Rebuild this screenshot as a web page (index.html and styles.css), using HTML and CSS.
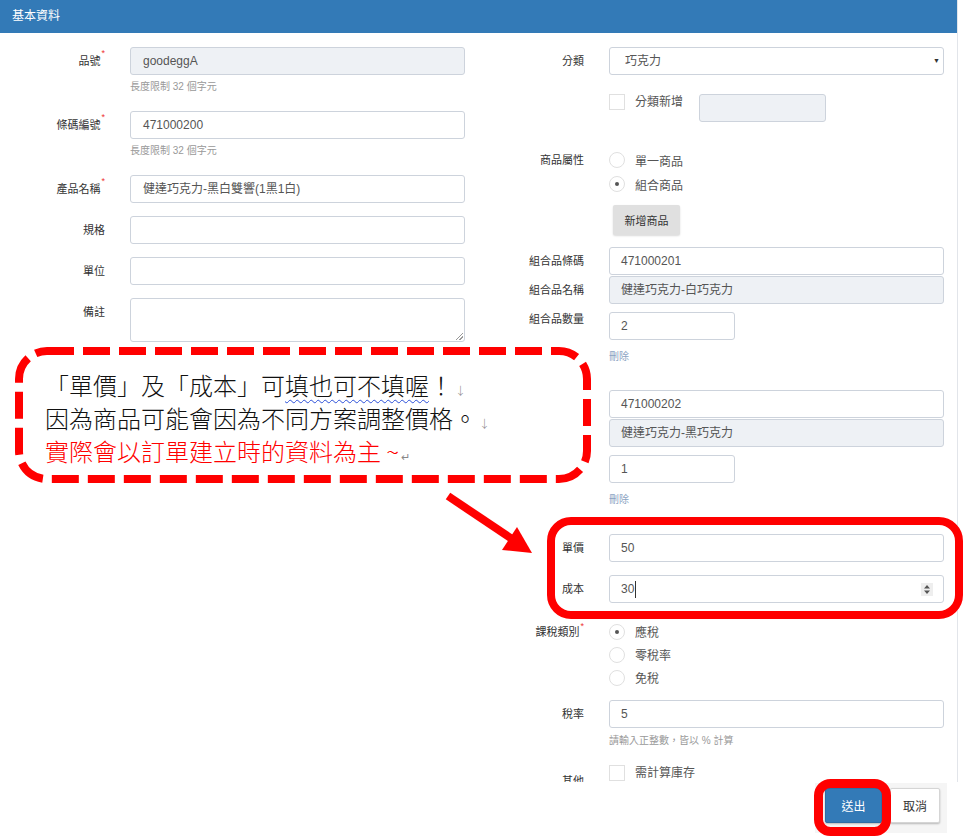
FILE: index.html
```html
<!DOCTYPE html>
<html lang="zh-Hant">
<head>
  <meta charset="UTF-8">
  <meta name="viewport" content="width=device-width, initial-scale=1.0">
  <title>基本資料</title>
  <link rel="stylesheet" href="styles.css">
</head>
<body>

<div class="page">
  <div class="panel">
    <div class="panel-heading">基本資料</div>

    <div class="panel-body">
      <!-- 左欄 -->
      <div class="col">
        <div class="form-row">
          <label class="lbl">品號<span class="req">*</span></label>
          <div class="ctl">
            <div class="field disabled">goodeggA</div>
            <div class="help">長度限制 32 個字元</div>
          </div>
        </div>
        <div class="form-row">
          <label class="lbl">條碼編號<span class="req">*</span></label>
          <div class="ctl">
            <div class="field">471000200</div>
            <div class="help">長度限制 32 個字元</div>
          </div>
        </div>
        <div class="form-row">
          <label class="lbl">產品名稱<span class="req">*</span></label>
          <div class="ctl"><div class="field">健達巧克力-黑白雙響(1黑1白)</div></div>
        </div>
        <div class="form-row">
          <label class="lbl">規格</label>
          <div class="ctl"><div class="field"></div></div>
        </div>
        <div class="form-row">
          <label class="lbl">單位</label>
          <div class="ctl"><div class="field"></div></div>
        </div>
        <div class="form-row">
          <label class="lbl">備註</label>
          <div class="ctl"><div class="field textarea"></div></div>
        </div>
      </div>

      <!-- 右欄 -->
      <div class="col right">
        <div class="form-row">
          <label class="lbl">分類</label>
          <div class="ctl">
            <div class="field select">巧克力<span class="caret">▼</span></div>
          </div>
        </div>

        <div class="form-row cat-new">
          <label class="lbl"></label>
          <div class="ctl inline">
            <span class="checkbox"></span>
            <span class="opt-text">分類新增</span>
            <div class="field disabled small"></div>
          </div>
        </div>

        <div class="form-row attr">
          <label class="lbl short">商品屬性</label>
          <div class="ctl">
            <div class="radio-item"><span class="radio"></span>單一商品</div>
            <div class="radio-item"><span class="radio checked"></span>組合商品</div>
          </div>
        </div>

        <div class="form-row add-row">
          <label class="lbl"></label>
          <div class="ctl"><button class="btn-gray">新增商品</button></div>
        </div>

        <div class="form-row combo-first">
          <label class="lbl">組合品條碼</label>
          <div class="ctl"><div class="field">471000201</div></div>
        </div>
        <div class="form-row combo-name">
          <label class="lbl">組合品名稱</label>
          <div class="ctl"><div class="field disabled">健達巧克力-白巧克力</div></div>
        </div>
        <div class="form-row combo-qty">
          <label class="lbl top">組合品數量</label>
          <div class="ctl"><div class="field qty">2</div></div>
        </div>
        <div class="form-row combo-del">
          <label class="lbl"></label>
          <div class="ctl"><a href="#" class="del">刪除</a></div>
        </div>

        <div class="form-row combo-first">
          <label class="lbl"></label>
          <div class="ctl"><div class="field">471000202</div></div>
        </div>
        <div class="form-row combo-name">
          <label class="lbl"></label>
          <div class="ctl"><div class="field disabled">健達巧克力-黑巧克力</div></div>
        </div>
        <div class="form-row combo-qty">
          <label class="lbl"></label>
          <div class="ctl"><div class="field qty">1</div></div>
        </div>
        <div class="form-row combo-del">
          <label class="lbl"></label>
          <div class="ctl"><a href="#" class="del">刪除</a></div>
        </div>

        <div class="form-row price">
          <label class="lbl">單價</label>
          <div class="ctl"><div class="field">50</div></div>
        </div>
        <div class="form-row cost">
          <label class="lbl">成本</label>
          <div class="ctl">
            <div class="field number">30<span class="cursor"></span>
              <span class="spin">
                <svg width="8" height="11" viewBox="0 0 8 11"><path d="M4 1 L7 4.5 H1 Z M4 10 L7 6.5 H1 Z" fill="#555"/></svg>
              </span>
            </div>
          </div>
        </div>

        <div class="form-row tax">
          <label class="lbl short">課稅類別<span class="req">*</span></label>
          <div class="ctl">
            <div class="radio-item tight"><span class="radio checked"></span>應稅</div>
            <div class="radio-item tight"><span class="radio"></span>零稅率</div>
            <div class="radio-item tight"><span class="radio"></span>免稅</div>
          </div>
        </div>

        <div class="form-row rate">
          <label class="lbl">稅率</label>
          <div class="ctl">
            <div class="field">5</div>
            <div class="help">請輸入正整數，皆以 % 計算</div>
          </div>
        </div>

        <div class="form-row other">
          <label class="lbl other-lbl">其他</label>
          <div class="ctl inline">
            <span class="checkbox"></span>
            <span class="opt-text">需計算庫存</span>
          </div>
        </div>
      </div>
    </div>
  </div>

  <div class="footer">
    <div class="actions">
      <button class="btn-primary">送出</button>
      <button class="btn-default">取消</button>
    </div>
  </div>

  <!-- 說明框 -->
  <div class="callout">
    <svg class="callout-border" width="576" height="136" viewBox="0 0 576 136">
      <rect x="4" y="4" width="568" height="128" rx="28" fill="none" stroke="#ff0000" stroke-width="8" stroke-dasharray="27 9"/>
    </svg>
    <p class="note">「單價」及「成本」可<span class="squiggle">填也可不填喔</span>！<span class="mark">↓</span></p>
    <p class="note">因為商品可能會因為不同方案調整價格。<span class="mark">↓</span></p>
    <p class="note red">實際會以訂單建立時的資料為主 ~<span class="mark">↵</span></p>
  </div>

  <!-- 標示 -->
  <svg class="marks" width="965" height="838" viewBox="0 0 965 838">
    <line x1="448" y1="496" x2="512" y2="539" stroke="#ff0000" stroke-width="8"/>
    <polygon points="532,553 502,550 517,527" fill="#ff0000"/>
    <rect x="551" y="521" width="408" height="94" rx="20" fill="none" stroke="#ff0000" stroke-width="8"/>
    <rect x="818.5" y="783.5" width="68" height="48" rx="12" fill="none" stroke="#ff0000" stroke-width="9"/>
  </svg>
</div>

</body>
</html>
```

FILE: styles.css
```css
body {
  margin: 0;
  font-family: "Liberation Sans", "Noto Sans CJK TC", sans-serif;
  background-color: #fff;
  color: #333;
}

.page {
  position: relative;
  width: 965px;
  height: 838px;
  overflow: hidden;
}

.panel {
  width: 957px;
  border-right: 1px solid #e2e5ea;
}

.panel-heading {
  height: 33px;
  line-height: 33px;
  padding-left: 12px;
  background-color: #337ab7;
  color: #fff;
  font-size: 12px;
}

.panel-body {
  display: flex;
  height: 749px;
  padding-top: 14px;
  box-sizing: border-box;
  overflow: hidden;
}

.col {
  width: 479px;
}

.col.right {
  width: 478px;
}

.form-row {
  display: flex;
  align-items: flex-start;
  margin-bottom: 13px;
}

.col.right .form-row {
  margin-bottom: 0;
}

.lbl {
  width: 105px;
  flex-shrink: 0;
  text-align: right;
  font-size: 11px;
  line-height: 28px;
  color: #333;
}

.lbl.short {
  line-height: 24px;
}

.lbl.top {
  line-height: 14px;
}

.req {
  color: #e33;
  font-size: 9px;
  vertical-align: top;
  line-height: 12px;
  margin-left: 1px;
}

.ctl {
  width: 335px;
  margin-left: 25px;
}

.ctl.inline {
  display: flex;
  align-items: flex-start;
}

.field {
  position: relative;
  height: 28px;
  box-sizing: border-box;
  border: 1px solid #cdd3dc;
  border-radius: 3px;
  padding: 0 11px;
  font-size: 12px;
  line-height: 26px;
  color: #555;
  background-color: #fff;
}

.col:first-child .field {
  padding-left: 12px;
}

.field.disabled {
  background-color: #eef1f5;
}

.field.textarea {
  height: 44px;
}

.field.textarea::after {
  content: "";
  position: absolute;
  right: 1px;
  bottom: 1px;
  width: 7px;
  height: 7px;
  background: linear-gradient(135deg, transparent 45%, #999 45%, #999 55%, transparent 55%, transparent 70%, #999 70%, #999 80%, transparent 80%);
}

.field.select {
  padding-left: 15px;
}

.caret {
  position: absolute;
  right: 3px;
  top: 0;
  font-size: 7px;
  color: #333;
}

.field.small {
  width: 127px;
  margin-left: 16px;
}

.field.qty {
  width: 126px;
}

.cursor {
  display: inline-block;
  width: 1px;
  height: 17px;
  background-color: #333;
  vertical-align: middle;
  margin-left: 1px;
}

.spin {
  position: absolute;
  right: 10px;
  top: 7px;
  width: 12px;
  height: 13px;
  background-color: #eee;
  display: flex;
  align-items: center;
  justify-content: center;
}

.help {
  margin-top: 5px;
  margin-bottom: 4px;
  font-size: 10px;
  line-height: 14px;
  color: #999;
}

.checkbox {
  display: inline-block;
  width: 16px;
  height: 16px;
  box-sizing: border-box;
  border: 1px solid #e0e0e0;
  background-color: #fff;
  flex-shrink: 0;
}

.opt-text {
  margin-left: 10px;
  font-size: 12px;
  line-height: 17px;
  color: #555;
}

.radio-item {
  display: flex;
  align-items: center;
  height: 24px;
  font-size: 12px;
  color: #555;
}

.radio-item.tight {
  height: 23px;
}

.radio {
  position: relative;
  width: 16px;
  height: 16px;
  box-sizing: border-box;
  border: 1px solid #e0e0e0;
  border-radius: 50%;
  background-color: #fff;
  margin-right: 10px;
}

.radio.checked::after {
  content: "";
  position: absolute;
  left: 5px;
  top: 5px;
  width: 4px;
  height: 4px;
  border-radius: 50%;
  background-color: #555;
}

.btn-gray {
  margin-left: 4px;
  width: 67px;
  height: 30px;
  border: none;
  border-radius: 2px;
  background-color: #e0e0e0;
  box-shadow: 0 1px 2px rgba(0, 0, 0, 0.15);
  font-family: inherit;
  font-size: 11px;
  color: #333;
}

.del {
  display: block;
  font-size: 10px;
  line-height: 14px;
  color: #8ba3c2;
  text-decoration: none;
}

/* 右欄間距 */
.cat-new { margin-top: 19px; }
.attr { margin-top: 26px; }
.add-row { margin-top: 9px; }
.combo-first { margin-top: 12px; }
.combo-del + .combo-first { margin-top: 26px; }
.combo-name { margin-top: 1px; }
.combo-qty { margin-top: 8px; }
.combo-del { margin-top: 10px; }
.price { margin-top: 27px; }
.cost { margin-top: 13px; }
.tax { margin-top: 17px; }
.rate { margin-top: 11px; }
.rate .help { margin-top: 6px; margin-bottom: 0; }
.other { margin-top: 17px; }

.other-lbl {
  padding-top: 9px;
  line-height: 14px;
}

.footer {
  display: flex;
  justify-content: flex-end;
  padding-right: 18px;
  padding-top: 1px;
}

.actions {
  display: flex;
  gap: 8px;
  padding: 5px 7px 10px 10px;
  background-color: #f5f5f5;
}

.btn-primary,
.btn-default {
  height: 35px;
  border-radius: 2px;
  font-family: inherit;
  font-size: 12px;
  box-shadow: 0 1px 2px rgba(0, 0, 0, 0.25);
}

.btn-primary {
  width: 57px;
  background-color: #337ab7;
  border: 1px solid #2e6da4;
  color: #fff;
}

.btn-default {
  width: 50px;
  background-color: #fff;
  border: 1px solid #d5d5d5;
  color: #333;
}

/* 說明框 */
.callout {
  position: absolute;
  left: 15px;
  top: 347px;
  width: 576px;
  height: 136px;
  box-sizing: border-box;
  padding: 24px 0 0 30px;
  background-color: #fff;
  border-radius: 30px;
  z-index: 2;
}

.callout-border {
  position: absolute;
  left: 0;
  top: 0;
}

.note {
  position: relative;
  margin: 0;
  font-family: "Noto Sans CJK TC", sans-serif;
  font-size: 24px;
  font-weight: 300;
  line-height: 28px;
  color: #111;
  white-space: nowrap;
}

.note.red {
  color: #ff0000;
}

.squiggle {
  text-decoration: underline wavy #2b4fd8;
  text-decoration-thickness: 1px;
  text-underline-offset: 4px;
}

.mark {
  font-size: 11px;
  color: #888;
  margin-left: 2px;
}

.marks {
  position: absolute;
  left: 0;
  top: 0;
  pointer-events: none;
  z-index: 3;
}
```
